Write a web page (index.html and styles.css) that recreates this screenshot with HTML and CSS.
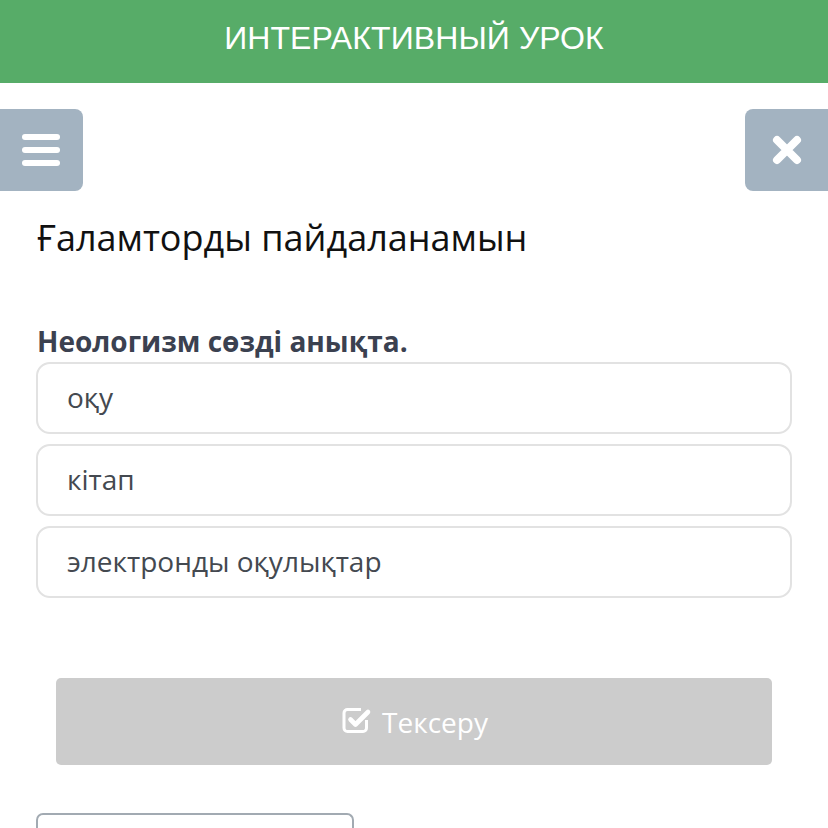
FILE: index.html
```html
<!DOCTYPE html>
<html lang="kk">
<head>
<meta charset="utf-8">
<link rel="stylesheet" href="styles.css">
</head>
<body>
<header class="topbar">ИНТЕРАКТИВНЫЙ УРОК</header>
<div class="toolbar">
  <button class="tool-btn menu-btn" aria-label="menu">
    <svg width="38" height="34" viewBox="0 0 38 34">
      <rect x="0" y="1" width="38" height="6" rx="3" fill="#fff"/>
      <rect x="0" y="14" width="38" height="6" rx="3" fill="#fff"/>
      <rect x="0" y="27" width="38" height="6" rx="3" fill="#fff"/>
    </svg>
  </button>
  <button class="tool-btn close-btn" aria-label="close">
    <svg width="30" height="30" viewBox="0 0 30 30">
      <path d="M5 5 L25 25 M25 5 L5 25" stroke="#fff" stroke-width="8" stroke-linecap="round"/>
    </svg>
  </button>
</div>
<main class="content">
  <h1 class="title">Ғаламторды пайдаланамын</h1>
  <p class="question">Неологизм сөзді анықта.</p>
  <div class="options">
    <div class="option">оқу</div>
    <div class="option">кітап</div>
    <div class="option">электронды оқулықтар</div>
  </div>
  <div class="check-wrap">
    <button class="check-btn">
      <svg class="check-icon" width="30" height="28" viewBox="0 0 30 28">
        <path d="M24.5 14 V22 a3.5 3.5 0 0 1 -3.5 3.5 H5.5 a3.5 3.5 0 0 1 -3.5 -3.5 V7 a3.5 3.5 0 0 1 3.5 -3.5 H19" fill="none" stroke="#fff" stroke-width="3"/>
        <path d="M8.5 13.5 L13.5 18.5 L26 6" fill="none" stroke="#fff" stroke-width="4.6" stroke-linecap="round" stroke-linejoin="round"/>
      </svg>
      <span>Тексеру</span>
    </button>
  </div>
  <div class="bottom-box"></div>
</main>
</body>
</html>
```
FILE: styles.css
```css
* { box-sizing: border-box; }
html, body { margin: 0; padding: 0; background: #fff; overflow: hidden; }
body { font-family: "Open Sans", "Noto Sans", sans-serif; width: 828px; height: 828px; }

.topbar {
  height: 83px;
  background: #57ac68;
  color: #fff;
  font-family: "Liberation Sans", Arial, sans-serif;
  font-size: 32px;
  letter-spacing: 0.1px;
  display: flex;
  align-items: center;
  justify-content: center;
  padding-bottom: 6px;
}

.toolbar {
  display: flex;
  justify-content: space-between;
  margin-top: 26px;
}
.tool-btn {
  width: 83px;
  height: 82px;
  border: none;
  background: #a3b3c1;
  display: flex;
  align-items: center;
  justify-content: center;
  padding: 0;
}
.menu-btn { border-radius: 0 8px 8px 0; padding-right: 2px; }
.close-btn { border-radius: 8px 0 0 8px; padding-left: 1px; }

.content { padding: 0 36px; }
.title {
  margin: 24px 0 0 1px;
  font-weight: 400;
  font-size: 36px;
  line-height: 46px;
  color: #111;
}
.question {
  margin: 62px 0 3px 1px;
  font-weight: 700;
  font-size: 28px;
  line-height: 36px;
  color: #3b4150;
}
.options {
  display: flex;
  flex-direction: column;
  gap: 10px;
  width: 756px;
}
.option {
  height: 72px;
  border: 2px solid #e2e2e2;
  border-radius: 14px;
  display: flex;
  align-items: center;
  padding-left: 29px;
  padding-bottom: 2px;
  font-size: 28px;
  color: #444950;
}
.check-wrap { padding: 80px 20px 0; }
.check-btn {
  width: 716px;
  height: 87px;
  border: none;
  background: #cccccc;
  border-radius: 5px;
  color: #fff;
  font-family: "Open Sans", "Noto Sans", sans-serif;
  font-size: 28px;
  display: flex;
  align-items: center;
  justify-content: center;
  gap: 10px;
  padding: 0 0 0 2px;
}
.check-icon { margin-top: -3px; flex: none; }
.bottom-box {
  margin-top: 48px;
  width: 318px;
  height: 15px;
  border: 2px solid #a2aab2;
  border-bottom: none;
  border-radius: 7px 7px 0 0;
}
```
